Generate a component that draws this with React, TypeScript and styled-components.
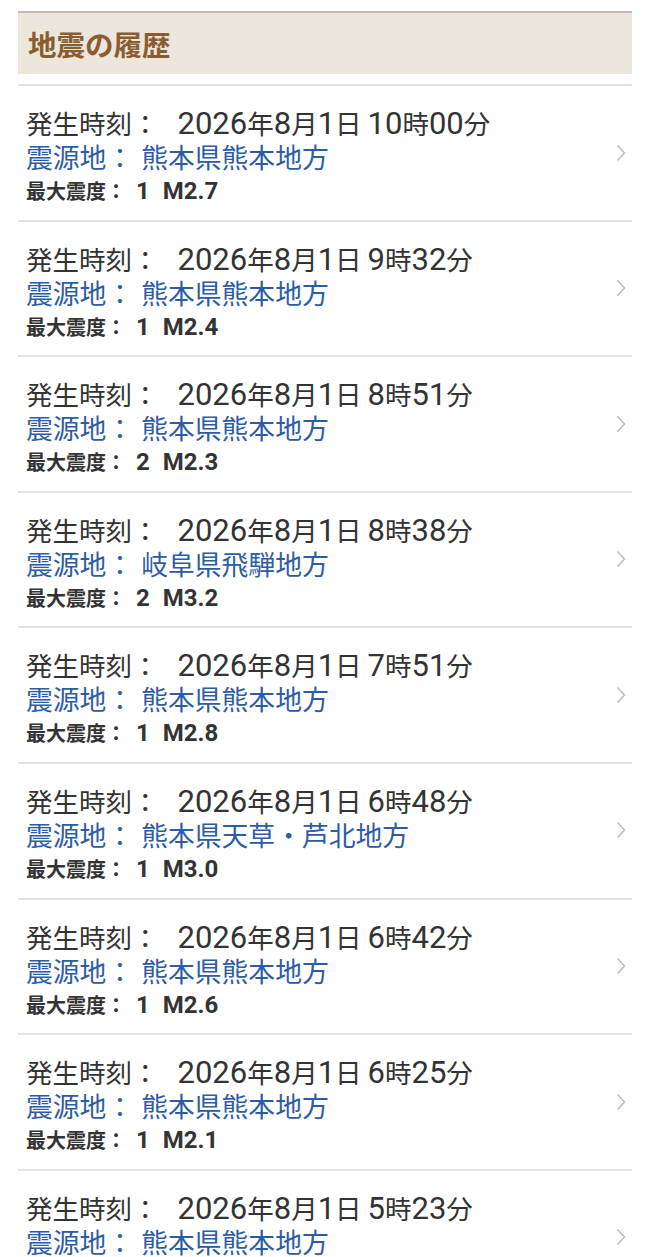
import React from "react";
import styled, { createGlobalStyle } from "styled-components";

type Quake = {
	time: string;
	area: string;
	intensity: string;
	magnitude: string;
};

const quakes: Quake[] = [
	{ time: "2026年8月1日 10時00分", area: "熊本県熊本地方", intensity: "1", magnitude: "M2.7" },
	{ time: "2026年8月1日 9時32分", area: "熊本県熊本地方", intensity: "1", magnitude: "M2.4" },
	{ time: "2026年8月1日 8時51分", area: "熊本県熊本地方", intensity: "2", magnitude: "M2.3" },
	{ time: "2026年8月1日 8時38分", area: "岐阜県飛騨地方", intensity: "2", magnitude: "M3.2" },
	{ time: "2026年8月1日 7時51分", area: "熊本県熊本地方", intensity: "1", magnitude: "M2.8" },
	{ time: "2026年8月1日 6時48分", area: "熊本県天草・芦北地方", intensity: "1", magnitude: "M3.0" },
	{ time: "2026年8月1日 6時42分", area: "熊本県熊本地方", intensity: "1", magnitude: "M2.6" },
	{ time: "2026年8月1日 6時25分", area: "熊本県熊本地方", intensity: "1", magnitude: "M2.1" },
	{ time: "2026年8月1日 5時23分", area: "熊本県熊本地方", intensity: "1", magnitude: "M2.5" },
];

// latin runs render larger than the kana/kanji around them on the device
function withLatin(text: string, size: number) {
	return text.split(/([0-9A-Za-z.]+)/).map((part, i) =>
		/^[0-9A-Za-z.]+$/.test(part) ? (
			<Latin key={i} $size={size}>
				{part}
			</Latin>
		) : (
			part
		)
	);
}

export default function App() {
	return (
		<>
			<GlobalStyle />
			<Page>
				<Header>
					<Title>地震の履歴</Title>
				</Header>
				<List>
					{quakes.map((q, i) => (
						<Item key={i}>
							<Info>
								<TimeLine>
									<Label $gap={19}>発生時刻：</Label>
									{withLatin(q.time, 31)}
								</TimeLine>
								<AreaLine>
									<Label $gap={8}>震源地：</Label>
									{q.area}
								</AreaLine>
								<ScaleLine>
									<Label $gap={10}>最大震度：</Label>
									<Latin $size={24}>{q.intensity}</Latin>
									<Latin $size={24} $gap={13}>{q.magnitude}</Latin>
								</ScaleLine>
							</Info>
							<Chevron width="10" height="18" viewBox="0 0 10 18">
								<path d="M1.5 1.5 L8.5 9 L1.5 16.5" fill="none" stroke="#bdbdbd" strokeWidth="1.6" />
							</Chevron>
						</Item>
					))}
				</List>
			</Page>
		</>
	);
}

const GlobalStyle = createGlobalStyle`
    html, body {
        margin: 0;
        padding: 0;
        background: #ffffff;
    }
    body {
        font-family: "Noto Sans CJK JP", Roboto, sans-serif;
        overflow: hidden;
    }
`;

const Page = styled.div`
    padding: 11px 18px 0;
    height: 1257px;
    box-sizing: border-box;
    overflow: hidden;
`;

const Header = styled.div`
    border-top: 2px solid #c4bcb1;
    background-color: #ede6dd;
    height: 61px;
    display: flex;
    align-items: center;
    padding-left: 10px;
`;

const Title = styled.h1`
    margin: 0;
    font-size: 28.5px;
    font-weight: 700;
    color: #8a5d30;
`;

const List = styled.div`
    margin-top: 10px;
`;

const Item = styled.div`
    border-top: 2px solid #e4e4e4;
    display: flex;
    align-items: center;
    justify-content: space-between;
    padding: 20px 6px 12.6px 8px;
`;

const Info = styled.div`
    display: flex;
    flex-direction: column;
`;

const TimeLine = styled.div`
    height: 34px;
    font-size: 26.5px;
    line-height: 34px;
    color: #333333;
    white-space: pre;
`;

const AreaLine = styled.div`
    height: 34px;
    font-size: 26.8px;
    line-height: 34px;
    color: #2d5ca6;
`;

const ScaleLine = styled.div`
    height: 33px;
    font-size: 20px;
    line-height: 33px;
    font-weight: 700;
    color: #333333;
`;

const Label = styled.span<{ $gap: number }>`
    margin-right: ${(p) => p.$gap}px;
`;

const Latin = styled.span<{ $size: number; $gap?: number }>`
    font-family: Roboto, "Noto Sans CJK JP", sans-serif;
    font-size: ${(p) => p.$size}px;
    line-height: 0;
    margin-left: ${(p) => p.$gap ?? 0}px;
`;

const Chevron = styled.svg`
    flex-shrink: 0;
    margin-top: -8px;
`;
